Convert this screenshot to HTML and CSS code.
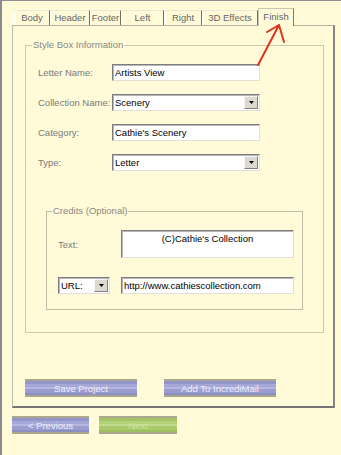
FILE: index.html
```html
<!DOCTYPE html>
<html lang="en">

<head>
  <meta charset="UTF-8" />
  <meta name="viewport" content="width=device-width, initial-scale=1.0" />
  <title>Style Box - Finish</title>
  <link rel="stylesheet" href="styles.css">
</head>

<body>
  <div class="window">
    <div class="tabs">
      <span class="tab tab-body">Body</span>
      <span class="tab tab-header">Header</span>
      <span class="tab tab-footer">Footer</span>
      <span class="tab tab-left">Left</span>
      <span class="tab tab-right">Right</span>
      <span class="tab tab-effects">3D Effects</span>
      <span class="tab tab-finish active">Finish</span>
    </div>

    <div class="panel">
      <fieldset class="group style-box">
        <legend>Style Box Information</legend>
        <div class="rows">
          <label>Letter Name:</label>
          <input class="field" type="text" value="Artists View">
          <label>Collection Name:</label>
          <div class="combo"><span>Scenery</span><i class="drop"></i></div>
          <label>Category:</label>
          <input class="field" type="text" value="Cathie's Scenery">
          <label>Type:</label>
          <div class="combo"><span>Letter</span><i class="drop"></i></div>
        </div>

        <fieldset class="group credits">
          <legend>Credits (Optional)</legend>
          <div class="credit-rows">
            <label>Text:</label>
            <div class="note">(C)Cathie's Collection</div>
            <div class="combo url"><span>URL:</span><i class="drop"></i></div>
            <input class="field" type="text" value="http://www.cathiescollection.com">
          </div>
        </fieldset>
      </fieldset>

      <div class="actions">
        <button class="btn blue">Save Project</button>
        <button class="btn blue">Add To IncrediMail</button>
      </div>
    </div>

    <div class="nav">
      <button class="btn blue prev">&lt; Previous</button>
      <button class="btn green next" disabled>Next</button>
    </div>

    <!-- red pointer drawn over the Finish tab -->
    <svg class="arrow" width="40" height="50" viewBox="0 0 40 50">
      <path d="M8 45 L29 5 M17 12 L29 5 L34 22" fill="none" stroke="#e2321c" stroke-width="2" stroke-linecap="round" stroke-linejoin="round" />
    </svg>
  </div>
</body>

</html>
```

FILE: styles.css
```css
* {
  box-sizing: border-box;
}

body {
  margin: 0;
  background-color: #fffbd8;
  font-family: "Liberation Sans", Arial, sans-serif;
  font-size: 9.5px;
}

.window {
  position: relative;
  width: 341px;
  height: 455px;
  padding-top: 7px;
  border-left: 2px solid #8c8c8c;
  border-top: 1px solid #8f8f8f;
}

/* tab strip */
.tabs {
  position: relative;
  z-index: 1;
  display: flex;
  align-items: flex-end;
  height: 18px;
  margin: 0 0 -1px 12px;
}

.tab {
  height: 15px;
  margin-bottom: 1px;
  line-height: 13px;
  text-align: center;
  white-space: nowrap;
  color: #666;
  background-color: #fffbd8;
  border-top: 1px solid #ebe8d4;
  border-left: 1px solid #fff;
  border-right: 1px solid #6e6e6e;
}

.tab-body { width: 36px; }
.tab-header { width: 40px; }
.tab-footer { width: 31px; }
.tab-left { width: 43px; }
.tab-right { width: 38px; }
.tab-effects { width: 56px; }

.tab-finish {
  width: 36px;
}

.tab.active {
  height: 18px;
  margin-bottom: 0;
  line-height: 15px;
  border-top: 1px solid #c9c7b6;
  border-left: 1px solid #c9c7b6;
  border-right: 1px solid #7a7a7a;
}

/* page of the tab control */
.panel {
  width: 323px;
  margin-left: 10px;
  padding-top: 13px;
  border-top: 1px solid #b4b2a0;
  border-left: 1px solid #bdbba9;
  border-right: 2px solid #858585;
  border-bottom: 2px solid #747474;
}

.group {
  margin: 0;
  padding: 0;
  min-width: 0;
  border: 1px solid #cbc8b3;
}

.group legend {
  padding: 0 1px;
  line-height: 12px;
  color: #888;
}

.style-box {
  width: 299px;
  margin-left: 12px;
  padding-bottom: 22px;
}

.style-box > legend {
  margin-left: 6px;
}

.rows {
  display: grid;
  grid-template-columns: 74px 148px;
  row-gap: 13px;
  align-items: center;
  padding: 13px 0 0 12px;
}

label {
  color: #7a7a7a;
  white-space: nowrap;
}

.field,
.combo,
.note {
  height: 17px;
  margin: 0;
  padding: 0 2px;
  font-family: inherit;
  font-size: 9.5px;
  color: #000;
  background-color: #fff;
  border: 1px solid;
  border-color: #7c7c7c #e2e0d6 #e2e0d6 #7c7c7c;
  box-shadow: inset 1px 1px 0 #b9b9b9;
  outline: none;
}

.combo {
  display: flex;
  align-items: center;
  justify-content: space-between;
  padding-right: 1px;
}

.drop {
  position: relative;
  width: 14px;
  height: 13px;
  background-color: #dcdad0;
  border: 1px solid;
  border-color: #f6f6f6 #7f7f7f #7f7f7f #f6f6f6;
}

.drop::after {
  content: "";
  position: absolute;
  left: 4px;
  top: 4px;
  width: 5px;
  height: 3px;
  background-color: #000;
  clip-path: polygon(0 0, 100% 0, 50% 100%);
}

.credits {
  width: 257px;
  margin: 34px 0 0 20px;
  padding-bottom: 15px;
  border-color: #bfbca8;
}

.credits > legend {
  margin-left: 5px;
}

.credit-rows {
  display: grid;
  grid-template-columns: 63px 173px;
  row-gap: 19px;
  align-items: center;
  padding: 13px 0 0 11px;
}

.note {
  height: 28px;
  padding-top: 2px;
  text-align: center;
}

.combo.url {
  width: 52px;
}

/* bottom buttons */
.actions {
  display: flex;
  gap: 27px;
  margin: 46px 0 9px 12px;
}

.btn {
  height: 18px;
  padding: 0;
  border: none;
  font-family: inherit;
  font-size: 9.5px;
  color: #eeeefb;
}

.btn.blue {
  background: linear-gradient(#aaa78e 0 2px, #9396ca 2px 5px, #a5a7d7 5px 8px, #b6b8e1 8px 10px, #9b9dcf 10px 14px, #8c8fc4 14px 16px, #aaa78e 16px 18px);
}

.btn.green {
  color: #cde2a3;
  background: linear-gradient(#aaa78e 0 2px, #a4c563 2px 5px, #b2d178 5px 8px, #c0db8e 8px 10px, #a9c96b 10px 14px, #9dbf5c 14px 16px, #aaa78e 16px 18px);
}

.actions .btn {
  width: 112px;
}

.nav {
  display: flex;
  gap: 10px;
  margin: 8px 0 0 10px;
}

.nav .prev {
  width: 77px;
}

.nav .next {
  width: 78px;
}

.arrow {
  position: absolute;
  left: 248px;
  top: 19px;
  z-index: 2;
}
```
